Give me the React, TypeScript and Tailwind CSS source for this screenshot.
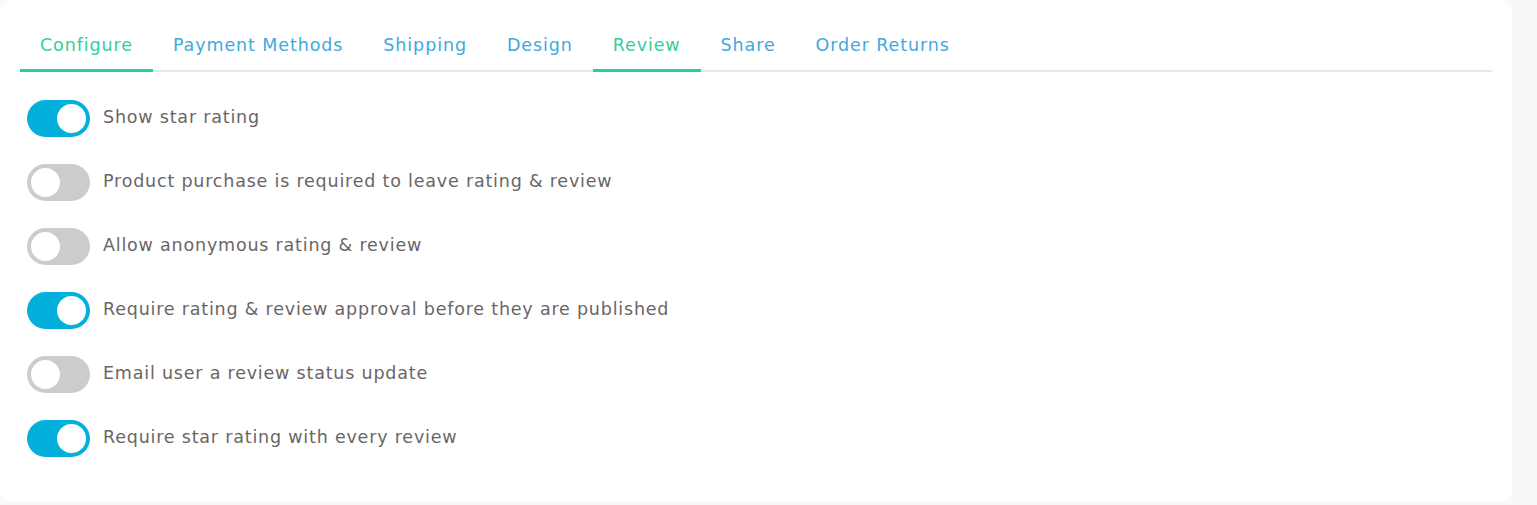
import React, { useState } from 'react';

const tabs = ['Configure', 'Payment Methods', 'Shipping', 'Design', 'Review', 'Share', 'Order Returns'];
const activeTabs = ['Configure', 'Review'];

const settings = [
  { label: 'Show star rating', on: true },
  { label: 'Product purchase is required to leave rating & review', on: false },
  { label: 'Allow anonymous rating & review', on: false },
  { label: 'Require rating & review approval before they are published', on: true },
  { label: 'Email user a review status update', on: false },
  { label: 'Require star rating with every review', on: true },
];

const Toggle: React.FC<{ on: boolean; onClick: () => void }> = ({ on, onClick }) => (
  <button
    onClick={onClick}
    className={`relative h-[37px] w-[63px] shrink-0 rounded-full ${on ? 'bg-[#03b0dc]' : 'bg-[#cccccc]'}`}
  >
    <span
      className={`absolute top-[4px] h-[29px] w-[29px] rounded-full bg-white ${on ? 'left-[30px]' : 'left-[4px]'}`}
    />
  </button>
);

export default function App() {
  const [values, setValues] = useState(settings.map((s) => s.on));

  return (
    <div className="h-[505px] w-[1537px] bg-[#f8f8f9] font-['DejaVu_Sans',sans-serif]">
      <div className="h-[502px] w-[1512px] rounded-[12px] bg-white">
        {/* Tabs */}
        <div className="px-[20px] pt-[32px]">
          <div className="flex w-[1472px] border-b-2 border-[#e4e7ec]">
            {tabs.map((t) => {
              const active = activeTabs.includes(t);
              return (
                <div
                  key={t}
                  className={`-mb-[2px] px-[20px] pb-[11px] text-[17.5px] tracking-[0.9px] ${
                    active ? 'border-b-[3px] border-[#1fd1a6] text-[#34cda0]' : 'border-b-[3px] border-transparent text-[#41a9dc]'
                  }`}
                >
                  {t}
                </div>
              );
            })}
          </div>
        </div>

        {/* Settings */}
        <div className="flex flex-col gap-[27px] pl-[27px] pt-[28px]">
          {settings.map((s, i) => (
            <div key={s.label} className="flex items-center gap-[13px]">
              <Toggle on={values[i]} onClick={() => setValues(values.map((v, j) => (j === i ? !v : v)))} />
              <span className="-mt-[4px] text-[17.5px] tracking-[0.8px] text-[#6a6666]">{s.label}</span>
            </div>
          ))}
        </div>
      </div>
    </div>
  );
}
